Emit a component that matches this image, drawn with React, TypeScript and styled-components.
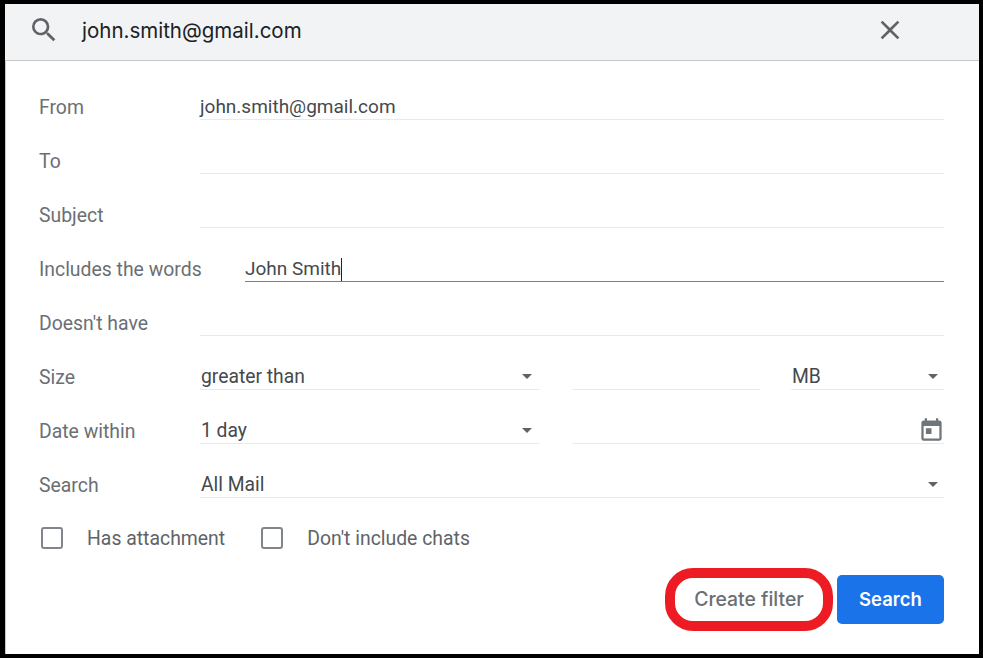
import styled, { createGlobalStyle } from "styled-components";
import { MdSearch, MdClose, MdToday } from "react-icons/md";

const GlobalStyle = createGlobalStyle`
  html, body {
    margin: 0;
    padding: 0;
    background: #000;
  }
`;

export default function App() {
  return (
    <>
      <GlobalStyle />
      <Frame>
        <SearchBar>
          <SearchLeft>
            <MdSearch color="#5f6368" size={32} />
            <SearchText>john.smith@gmail.com</SearchText>
          </SearchLeft>
          <CloseButton>
            <MdClose color="#5f6368" size={32} />
          </CloseButton>
        </SearchBar>
        <Panel>
          <Row>
            <Label>From</Label>
            <Field>john.smith@gmail.com</Field>
          </Row>
          <Row>
            <Label>To</Label>
            <Field />
          </Row>
          <Row>
            <Label>Subject</Label>
            <Field />
          </Row>
          <Row>
            <Label $wide>Includes the words</Label>
            <Field $focused>
              John Smith
              <Caret />
            </Field>
          </Row>
          <Row>
            <Label>Doesn't have</Label>
            <Field />
          </Row>
          <Row>
            <Label>Size</Label>
            <SelectField $width={340} $inset={8}>
              greater than
              <Arrow />
            </SelectField>
            <Field $width={188} $gap={32} />
            <SelectField $width={153} $gap={31}>
              MB
              <Arrow />
            </SelectField>
          </Row>
          <Row>
            <Label>Date within</Label>
            <SelectField $width={340} $inset={8}>
              1 day
              <Arrow />
            </SelectField>
            <DateField>
              <MdToday color="#70757a" size={27} />
            </DateField>
          </Row>
          <Row>
            <Label>Search</Label>
            <SelectField>
              All Mail
              <Arrow />
            </SelectField>
          </Row>
          <CheckRow>
            <CheckItem>
              <CheckBox />
              <CheckLabel>Has attachment</CheckLabel>
            </CheckItem>
            <CheckItem>
              <CheckBox />
              <CheckLabel>Don't include chats</CheckLabel>
            </CheckItem>
          </CheckRow>
          <Actions>
            <CreateFilter>Create filter</CreateFilter>
            <SearchButton>Search</SearchButton>
          </Actions>
        </Panel>
      </Frame>
    </>
  );
}

const Frame = styled.div`
  box-sizing: border-box;
  width: 983px;
  height: 658px;
  background: #000;
  padding: 4px 4px 4px 5px;
  display: flex;
  flex-direction: column;
  overflow: hidden;
`;

const SearchBar = styled.div`
  box-sizing: border-box;
  height: 57px;
  flex: none;
  background: #f1f3f4;
  border-bottom: 1px solid #c8c8c8;
  display: flex;
  align-items: center;
  justify-content: space-between;
  padding: 0 73px 4px 23px;
`;

const SearchLeft = styled.div`
  display: flex;
  align-items: center;
  gap: 22px;
`;

const SearchText = styled.span`
  font-family: Inter, sans-serif;
  font-size: 20.5px;
  color: #202124;
`;

const CloseButton = styled.div`
  display: flex;
`;

const Panel = styled.div`
  box-sizing: border-box;
  flex: 1;
  background: #fff;
  border-left: 1px solid #c8c8c8;
  padding: 5px 35px 0 33px;
  display: flex;
  flex-direction: column;
  font-family: Roboto, sans-serif;
  font-size: 19.4px;
`;

const Row = styled.div`
  height: 54px;
  flex: none;
  display: flex;
  align-items: flex-end;
`;

const Label = styled.div<{ $wide?: boolean }>`
  width: ${(p) => (p.$wide ? 206 : 161)}px;
  flex: none;
  height: 26px;
  line-height: 28px;
  color: #6b6f74;
`;

const Field = styled.div<{ $focused?: boolean; $width?: number; $gap?: number }>`
  box-sizing: border-box;
  ${(p) => (p.$width ? `width: ${p.$width}px; flex: none;` : "flex: 1;")}
  margin-left: ${(p) => p.$gap ?? 0}px;
  height: 26px;
  line-height: 26px;
  font-size: 19px;
  color: #45494d;
  border-bottom: 1px solid ${(p) => (p.$focused ? "#4285f4" : "#e8eaed")};
  display: flex;
`;

const Caret = styled.span`
  width: 1px;
  height: 23px;
  margin-top: 2px;
  background: #202124;
`;

const SelectField = styled(Field)<{ $inset?: number }>`
  align-items: flex-start;
  justify-content: space-between;
  font-size: 19.3px;
  padding-left: 1px;
  padding-right: ${(p) => p.$inset ?? 6}px;
`;

const Arrow = styled.span`
  width: 0;
  height: 0;
  margin-top: 10px;
  border-left: 5.5px solid transparent;
  border-right: 5.5px solid transparent;
  border-top: 5.5px solid #5f6368;
`;

const DateField = styled(Field)`
  flex: 1;
  margin-left: 32px;
  justify-content: flex-end;
  align-items: center;
  svg {
    margin-right: -1px;
  }
`;

const CheckRow = styled.div`
  display: flex;
  align-items: center;
  gap: 34px;
  margin-top: 28px;
  height: 24px;
`;

const CheckItem = styled.label`
  display: flex;
  align-items: center;
  gap: 24px;
  margin-left: 2px;
`;

const CheckBox = styled.span`
  box-sizing: border-box;
  width: 22px;
  height: 22px;
  border: 2px solid #80868b;
  border-radius: 3px;
`;

const CheckLabel = styled.span`
  color: #5f6368;
`;

const Actions = styled.div`
  display: flex;
  justify-content: flex-end;
  align-items: center;
  gap: 4px;
  margin-top: 18px;
`;

const CreateFilter = styled.button`
  box-sizing: border-box;
  width: 168px;
  height: 63px;
  background: #fff;
  border: 10px solid #ed1c24;
  border-radius: 28px;
  font-family: Inter, sans-serif;
  font-size: 19.4px;
  font-weight: 500;
  color: #6b6f74;
  padding: 0 0 2px;
`;

const SearchButton = styled.button`
  box-sizing: border-box;
  width: 107px;
  height: 49px;
  background: #1a73e8;
  border: none;
  border-radius: 5px;
  font-family: Inter, sans-serif;
  font-size: 18.5px;
  font-weight: 600;
  color: #fff;
  padding: 0 0 2px;
`;
